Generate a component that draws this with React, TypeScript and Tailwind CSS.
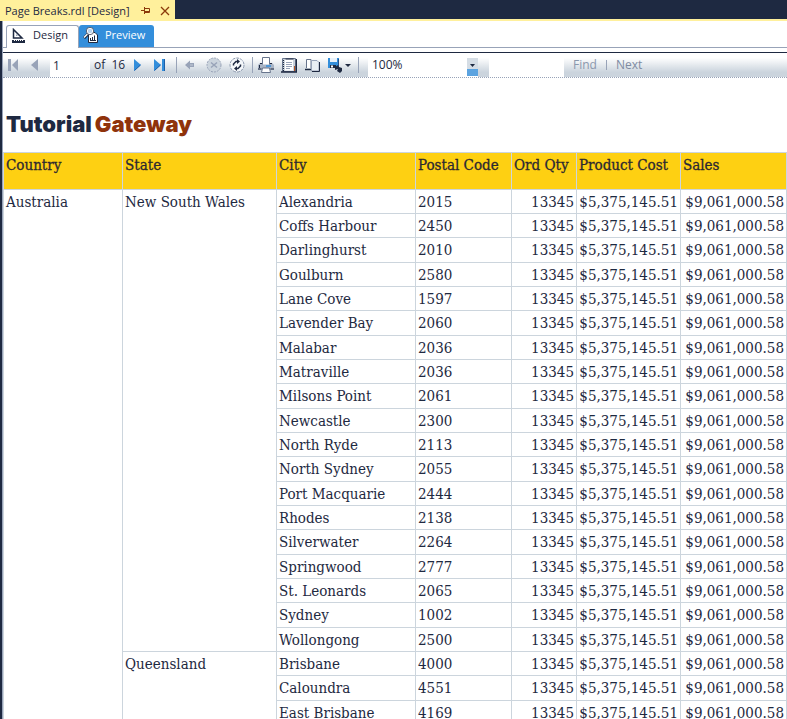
import React from "react";

const SANS = "font-['Open_Sans','Noto_Sans',sans-serif]";
const SERIF = "font-['DejaVu_Serif_Condensed','DejaVu_Serif',serif]";

const rows: [string, string][] = [
  ["Alexandria", "2015"],
  ["Coffs Harbour", "2450"],
  ["Darlinghurst", "2010"],
  ["Goulburn", "2580"],
  ["Lane Cove", "1597"],
  ["Lavender Bay", "2060"],
  ["Malabar", "2036"],
  ["Matraville", "2036"],
  ["Milsons Point", "2061"],
  ["Newcastle", "2300"],
  ["North Ryde", "2113"],
  ["North Sydney", "2055"],
  ["Port Macquarie", "2444"],
  ["Rhodes", "2138"],
  ["Silverwater", "2264"],
  ["Springwood", "2777"],
  ["St. Leonards", "2065"],
  ["Sydney", "1002"],
  ["Wollongong", "2500"],
  ["Brisbane", "4000"],
  ["Caloundra", "4551"],
  ["East Brisbane", "4169"],
];

const NSW_COUNT = 19;
const cell = "border border-[#ccd5dd] px-[2px] pt-[3px] align-top leading-[18px] whitespace-nowrap";
const headings = ["Country", "State", "City", "Postal Code", "Ord Qty", "Product Cost", "Sales"];

function IconButton({ label, className = "", children }: { label: string; className?: string; children: React.ReactNode }) {
  return (
    <button type="button" aria-label={label} className={`flex h-4 shrink-0 items-center justify-center ${className}`}>
      {children}
    </button>
  );
}

function Divider({ className = "" }: { className?: string }) {
  return <span className={`h-4 w-px shrink-0 bg-[#98a3b8] ${className}`} />;
}

function TitleBar() {
  return (
    <div className="flex h-[21px] shrink-0 border-b-2 border-[#fff09c]">
      <div className="flex w-[175px] items-center bg-[#fff09c] pl-[5px] text-[11px] leading-[16px] whitespace-nowrap">
        <span className="w-[136px] pt-[2px]">Page Breaks.rdl [Design]</span>
        <button type="button" aria-label="Pin" className="pt-[2px]">
          <svg width="10" height="9" viewBox="0 0 10 9" fill="none" stroke="#8b3a0b">
            <path d="M0 4.500h3M3.500 1v7M4 2.500h4.500v4H4M4 5.500h4" />
          </svg>
        </button>
        <button type="button" aria-label="Close" className="ml-[9px] pt-[2px]">
          <svg width="10" height="10" viewBox="0 0 10 10" stroke="#8b3a0b" strokeWidth="1.300">
            <path d="M1 1l8 8M9 1L1 9" />
          </svg>
        </button>
      </div>
    </div>
  );
}

function Tabs() {
  return (
    <div className="mb-[4px] flex h-[27px] shrink-0 items-end border-b border-[#98a3b8] pl-[3px] text-[11px]">
      <button type="button" className="-mb-px flex h-[23px] w-[73px] items-center gap-[7px] rounded-t-[3px] border border-b-0 border-[#98a3b8] bg-white pb-[3px] pl-[5px]">
        <svg width="14" height="15" viewBox="0 0 14 15" fill="none">
          <path d="M1.500 1.500v8.500h8.500z" stroke="#1e2941" strokeWidth="1.500" />
          <path d="M4 6v2h2z" fill="#98a3b8" />
          <path d="M0 12h13v3H0z" fill="#1e2941" />
          <path d="M2.500 12v1M4.500 12v1M6.500 12v1M8.500 12v1M10.500 12v1" stroke="#fff" />
        </svg>
        Design
      </button>
      <button type="button" className="flex h-[22px] w-[75px] items-center gap-[6px] rounded-t-[3px] bg-[#338edb] pb-[2px] pl-[4px] text-white">
        <svg width="16" height="16" viewBox="0 0 16 16" fill="none">
          <path d="M5.500 5.500H12l2.500 2.500v7.500h-9z" fill="#fff" stroke="#1e2941" />
          <path d="M7.500 13v-2M9.500 13v-3M11.500 13V8.500M7 13.500h6" stroke="#1e2941" />
          <path d="M5 7L1 11" stroke="#1e2941" strokeWidth="3" />
          <path d="M4.500 7L1 10.500" stroke="#fff" strokeWidth="1.500" />
          <circle cx="7" cy="4" r="3" fill="#b9d3ee" stroke="#fff" strokeWidth="1.500" />
          <circle cx="7" cy="4" r="3.700" stroke="#1e2941" strokeWidth=".7" />
        </svg>
        Preview
      </button>
    </div>
  );
}

function ReportToolbar() {
  return (
    <div className="flex h-[26px] shrink-0 items-center border-t border-b border-t-[#1e2941] border-b-[#98a3b8] [border-bottom-style:dotted] bg-linear-to-b from-white from-20% to-[#cbd4dd] to-80% pl-[4px] text-[12px]">
      <IconButton label="First page" className="w-[12px]">
        <svg width="11" height="12" viewBox="0 0 11 12" fill="#98a3b8"><path d="M0 0h3v12H0zM10 0v12L4 6z" /></svg>
      </IconButton>
      <IconButton label="Previous page" className="ml-[11px] w-[8px]">
        <svg width="7" height="12" viewBox="0 0 7 12" fill="#98a3b8"><path d="M7 0v12L0 6z" /></svg>
      </IconButton>
      <input aria-label="Page number" defaultValue="1" className="ml-[12px] h-[24px] w-[40px] shrink-0 bg-white pl-[3px]" />
      <span className="ml-[4px] w-[39px] shrink-0 whitespace-pre">of  16</span>
      <IconButton label="Next page" className="w-[8px]">
        <svg width="7" height="12" viewBox="0 0 7 12"><path d="M0 0v12l7-6z" fill="#338edb" /><path d="M.5 11.500L6.500 6" stroke="#1e5fa8" /></svg>
      </IconButton>
      <IconButton label="Last page" className="ml-[12px] w-[12px]">
        <svg width="11" height="12" viewBox="0 0 11 12"><path d="M8 0h3v12H8zM0 0v12l7-6z" fill="#338edb" /><path d="M.5 11.500L6.500 6M10.500 0v12" stroke="#1e5fa8" /></svg>
      </IconButton>
      <Divider className="ml-[11px]" />
      <IconButton label="Back" className="ml-[8px] w-[10px]">
        <svg width="10" height="10" viewBox="0 0 10 10"><path d="M0 5l5-4.500V3h4v4H5v2.500z" fill="#98a3b8" /><path d="M5 5h3" stroke="#c3ccd8" /></svg>
      </IconButton>
      <IconButton label="Stop" className="ml-[11px] w-[16px]">
        <svg width="16" height="16" viewBox="0 0 16 16">
          <circle cx="8" cy="8" r="7" fill="#cbd4dd" stroke="#98a3b8" strokeDasharray="2 1" />
          <path d="M5 5.500l6 5M11 5.500l-6 5" stroke="#98a3b8" strokeWidth="1.500" />
        </svg>
      </IconButton>
      <IconButton label="Refresh" className="ml-[7px] w-[16px]">
        <svg width="16" height="16" viewBox="0 0 16 16" fill="none">
          <circle cx="8" cy="8" r="7" fill="#f4f7fa" stroke="#8b98ad" strokeDasharray="3 1" />
          <path d="M4.500 8.500V7L7 4.500h1M11.500 7.500V9L9 11.500H8" stroke="#1e2941" strokeWidth="1.500" />
          <path d="M8 2l3 2.500L8 7zM8 9v5l-3-2.500z" fill="#1e2941" />
        </svg>
      </IconButton>
      <Divider className="ml-[7px]" />
      <IconButton label="Print" className="ml-[5px] w-[16px]">
        <svg width="16" height="16" viewBox="0 0 16 16" fill="none">
          <path d="M0 8l2-2h12l2 2v5H0z" fill="#a9b4c5" />
          <path d="M4.500 7.500v-7h7v7" fill="#fff" stroke="#68758d" />
          <path d="M2 6.500h2M12 6.500h2M0 12h3.500M12.500 12H16M1.500 8v3" stroke="#1e2941" />
          <path d="M8 9h5" stroke="#338edb" strokeWidth="1.500" />
          <path d="M4.500 11h7l1 4.500h-9z" fill="#fff" stroke="#68758d" />
        </svg>
      </IconButton>
      <IconButton label="Print layout" className="ml-[7px] w-[16px]">
        <svg width="16" height="15" viewBox="0 0 16 15" fill="none">
          <path d="M1.500 .5h13v13h-13z" fill="#cbd4dd" stroke="#68758d" />
          <path d="M0 14h15.500V1" stroke="#1e2941" strokeWidth="1.500" />
          <path d="M4 1.500h8v11H4z" fill="#fff" />
          <path d="M5 4.500h6M5 6.500h6M5 8.500h6M5 10.500h4" stroke="#98a3b8" />
          <path d="M2.500 2v11" stroke="#1e2941" strokeDasharray="1 1" />
          <path d="M4.500 1h8" stroke="#1e2941" />
          <path d="M13.500 8v5" stroke="#b4501e" />
        </svg>
      </IconButton>
      <IconButton label="Page setup" className="ml-[7px] w-[16px]">
        <svg width="16" height="13" viewBox="0 0 16 13" fill="none">
          <path d="M2.500 9V.5H7V9" fill="#fff" stroke="#68758d" />
          <path d="M1 10.500h6" stroke="#1e2941" strokeWidth="1.500" />
          <path d="M7.500 1.500H13l2 2v8.500H7.500z" fill="#e9eef3" stroke="#98a3b8" />
          <path d="M15.500 3v9.500H8" stroke="#1e2941" />
        </svg>
      </IconButton>
      <IconButton label="Export" className="ml-[8px] w-[23px]">
        <svg width="23" height="15" viewBox="0 0 23 15" fill="none">
          <path d="M0 0h11v10H0z" fill="#338edb" />
          <path d="M2 0h7v4H2z" fill="#e9f2fb" />
          <path d="M2 7h6v3H2z" fill="#1e2941" />
          <path d="M3 7.500h2v2H3z" fill="#fff" />
          <path d="M10.500 1v8" stroke="#24508a" />
          <path d="M7 9l3-2 1 2 3 1v3l-2 2-3-2 1-2-3 1z" fill="#1e2941" />
          <path d="M17 6h6l-3 3z" fill="#1e2941" />
        </svg>
      </IconButton>
      <Divider className="ml-[7px]" />

      <div className="relative ml-[9px] h-[24px] w-[110px] shrink-0">
        <select aria-label="Zoom" defaultValue="100" className="h-full w-full appearance-none bg-white pl-[4px]">
          <option value="100">100%</option>
          <option value="200">200%</option>
        </select>
        <svg className="pointer-events-none absolute top-[5px] right-0" width="11" height="18" viewBox="0 0 11 18">
          <path d="M0 0h11v11H0z" fill="#d5dde5" />
          <path d="M0 11h11v7H0z" fill="#5ba3e0" />
          <path d="M3 6h5L5.500 9z" fill="#1e2941" />
        </svg>
      </div>
      <input aria-label="Search text" className="ml-[11px] h-[24px] w-[75px] shrink-0 bg-white px-1" />
      <button type="button" className="ml-[9px] text-[#8b98ad]">Find</button>
      <span className="ml-[9px] h-[10px] w-px bg-[#98a3b8]" />
      <button type="button" className="ml-[9px] text-[#7e8ba2]">Next</button>
    </div>
  );
}

function ReportTable() {
  return (
    <table className={`w-full table-fixed border-collapse text-[15px] ${SERIF}`}>
      <colgroup>
        <col className="w-[119px]" />
        <col />
        <col className="w-[139px]" />
        <col className="w-[96px]" />
        <col className="w-[65px]" />
        <col className="w-[104px]" />
        <col className="w-[106px]" />
      </colgroup>
      <thead>
        <tr className="h-[37px] bg-[#fed012] text-left">
          {headings.map((h) => (
            <th key={h} className={`${cell} font-normal [-webkit-text-stroke:0.300px_#3a2a1c]`}>{h}</th>
          ))}
        </tr>
      </thead>
      <tbody>
        {rows.map(([city, code], i) => (
          <tr key={city} className={i % 3 === 2 ? "h-[25px]" : "h-[24px]"}>
            {i === 0 && <td rowSpan={rows.length} className={cell}>Australia</td>}
            {i === 0 && <td rowSpan={NSW_COUNT} className={cell}>New South Wales</td>}
            {i === NSW_COUNT && <td rowSpan={rows.length - NSW_COUNT} className={cell}>Queensland</td>}
            <td className={cell}>{city}</td>
            <td className={cell}>{code}</td>
            <td className={`${cell} text-right`}>13345</td>
            <td className={`${cell} text-right`}>$5,375,145.51</td>
            <td className={`${cell} text-right`}>$9,061,000.58</td>
          </tr>
        ))}
      </tbody>
    </table>
  );
}

export default function App() {
  return (
    <div className={`flex h-screen flex-col overflow-hidden bg-[#1e2941] text-[#1e2941] ${SANS}`}>
      <TitleBar />
      <div className="ml-[2px] flex min-h-0 grow flex-col border-l border-[#98a3b8] bg-white">
        <Tabs />
        <ReportToolbar />
        <h1 className="flex h-[74px] shrink-0 items-end gap-[3px] pb-[14px] pl-[3px] font-['Inter',sans-serif] text-[22px] leading-[28px] font-black">
          <span>Tutorial</span>
          <span className="text-[#8f330b]">Gateway</span>
        </h1>
        <ReportTable />
      </div>
    </div>
  );
}
